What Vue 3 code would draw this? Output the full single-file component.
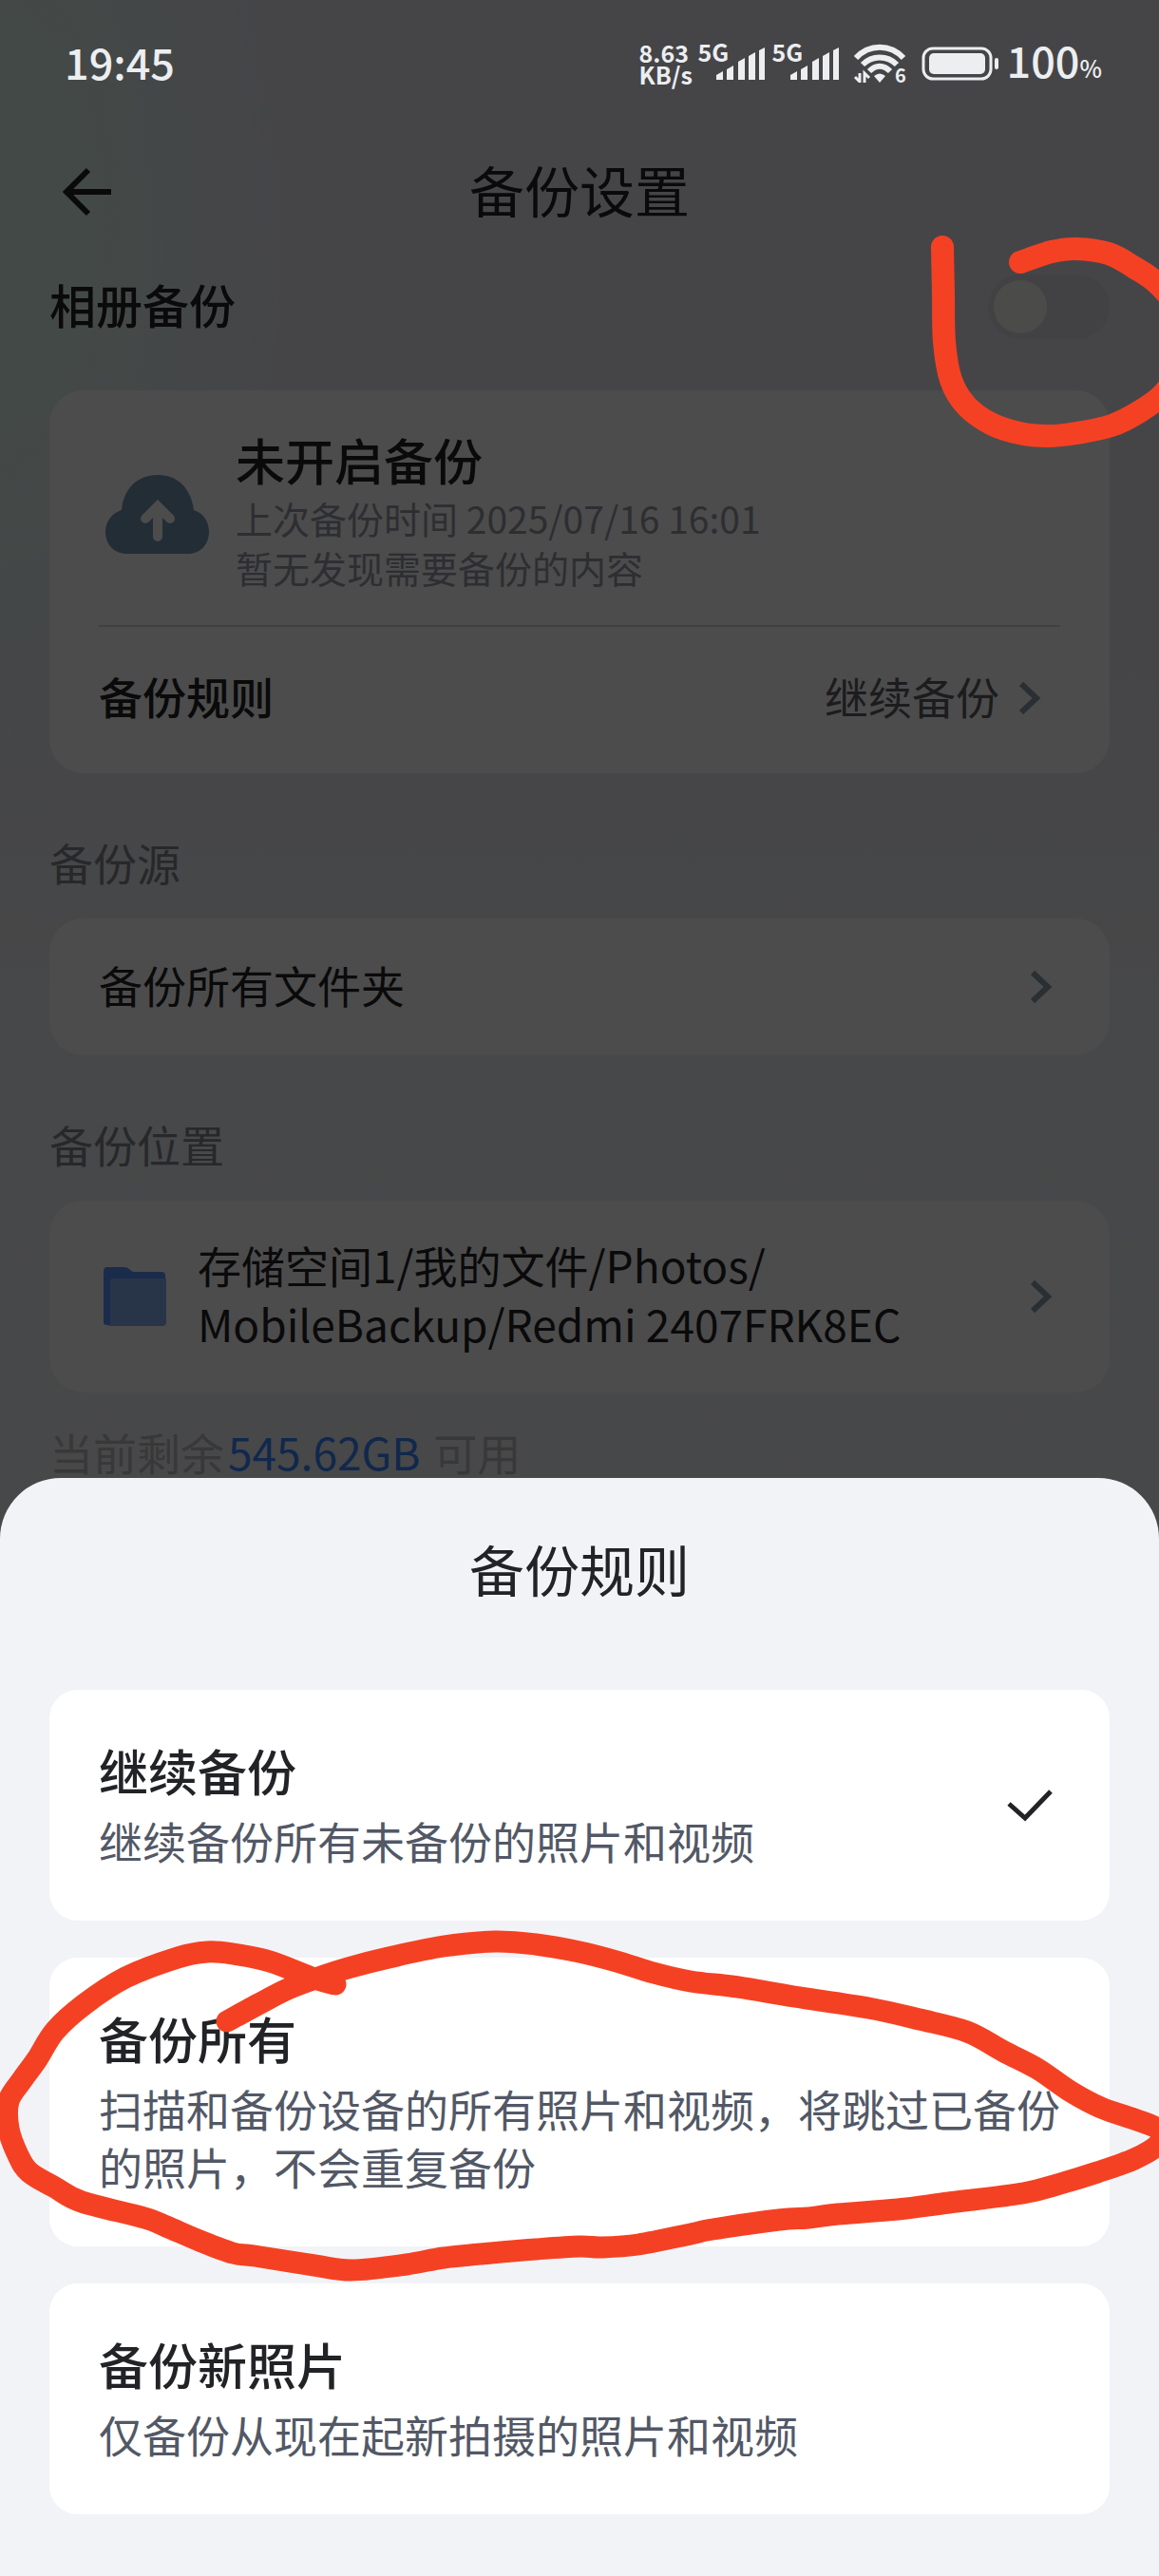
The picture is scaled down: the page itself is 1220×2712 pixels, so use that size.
<script setup>
import { ref } from 'vue'

const albumBackup = ref(false)
const rule = ref('continue')

const rules = [
  { id: 'continue', title: '继续备份', desc: '继续备份所有未备份的照片和视频' },
  { id: 'all', title: '备份所有', desc: '扫描和备份设备的所有照片和视频，将跳过已备份的照片，不会重复备份' },
  { id: 'new', title: '备份新照片', desc: '仅备份从现在起新拍摄的照片和视频' },
]

const signals = [0, 1]

// Centre lines of the hand-drawn marker strokes.
const toggleMark = [
  [992, 260], [993, 310], [994, 360], [1001, 400], [1017, 427], [1043, 446],
  [1073, 456], [1103, 459], [1133, 456], [1170, 448], [1200, 433], [1226, 413],
  [1246, 380], [1246, 335], [1220, 300], [1193, 281], [1167, 267], [1133, 262],
  [1107, 265], [1074, 276],
]
const optionMark = [
  [239, 2128], [272, 2110], [303, 2094], [335, 2082], [366, 2072], [409, 2061],
  [467, 2049], [521, 2044], [564, 2047], [610, 2055], [649, 2065], [688, 2077],
  [727, 2086], [777, 2092], [836, 2102], [914, 2114], [968, 2126], [1018, 2139],
  [1057, 2160], [1092, 2178], [1127, 2202], [1159, 2219], [1194, 2231],
  [1222, 2243], [1220, 2257], [1194, 2273], [1155, 2287], [1116, 2299],
  [1077, 2309], [999, 2319], [945, 2326], [882, 2331], [851, 2335], [820, 2337],
  [750, 2347], [727, 2352], [672, 2363], [633, 2366], [610, 2365], [564, 2368],
  [517, 2372], [467, 2377], [428, 2384], [370, 2390], [331, 2385], [268, 2375],
  [245, 2372], [210, 2359], [175, 2344], [152, 2335], [86, 2318], [58, 2303],
  [31, 2287], [19, 2269], [9, 2241], [9, 2212], [23, 2190], [39, 2168],
  [58, 2138], [89, 2110], [132, 2082], [187, 2061], [218, 2055], [245, 2057],
  [284, 2065], [331, 2083], [353, 2089],
]

// Catmull-Rom spline through the points, written as cubic Béziers.
function smooth(points) {
  let d = `M${points[0][0]} ${points[0][1]}`
  for (let i = 0; i < points.length - 1; i++) {
    const a = points[i - 1] || points[i]
    const b = points[i]
    const c = points[i + 1]
    const e = points[i + 2] || c
    d += `C${b[0] + (c[0] - a[0]) / 6} ${b[1] + (c[1] - a[1]) / 6} ${c[0] - (e[0] - b[0]) / 6} ${c[1] - (e[1] - b[1]) / 6} ${c[0]} ${c[1]}`
  }
  return d
}
</script>

<template>
  <div class="screen">
    <main class="page">
      <header class="topbar">
        <button class="back" type="button" aria-label="返回">
          <svg width="56" height="56" viewBox="0 0 56 56" fill="none" stroke="currentColor" stroke-width="6">
            <path d="M55 28H8M31 5L8 28L31 51" />
          </svg>
        </button>
        <h1>备份设置</h1>
      </header>

      <label class="switch-row">
        <span class="label">相册备份</span>
        <input v-model="albumBackup" class="switch" type="checkbox" role="switch" />
      </label>

      <section class="card">
        <div class="summary">
          <svg class="cloud" width="120" height="94" viewBox="0 0 120 94">
            <path fill="#7696b6" d="M30 94C16 94 7 84 7 71C7 60 14 51 24 48C26 25 41 11 62 11S97 25 100 48C110 51 116 60 116 71C116 84 107 94 94 94Z" />
            <path fill="none" stroke="#fff" stroke-width="10" stroke-linecap="round" stroke-linejoin="miter" d="M62 76V46M49 57L62 44L75 57" />
          </svg>
          <div>
            <h2>未开启备份</h2>
            <p>上次备份时间 2025/07/16 16:01</p>
            <p>暂无发现需要备份的内容</p>
          </div>
        </div>
        <button class="row rule-row" type="button">
          <span class="grow strong">备份规则</span>
          <span class="value">继续备份</span>
          <svg class="chevron" width="24" height="36" viewBox="0 0 24 36"><path d="M3 3L19 18L3 33" /></svg>
        </button>
      </section>

      <h3>备份源</h3>
      <button class="card row source-row" type="button">
        <span class="grow">备份所有文件夹</span>
        <svg class="chevron" width="24" height="36" viewBox="0 0 24 36"><path d="M3 3L19 18L3 33" /></svg>
      </button>

      <h3>备份位置</h3>
      <button class="card row path-row" type="button">
        <svg class="folder" width="76" height="64" viewBox="0 0 76 64">
          <path fill="#5a92fa" d="M5 5a4 4 0 0 1 4-4h17c3 0 5 1 7 3l3 2h30a4 4 0 0 1 4 4v10H14v42H8a3 3 0 0 1-3-3z" />
          <path fill="#86aef0" d="M15 13h56v46a4 4 0 0 1-4 4H8c3 0 4-1 4-4V16a3 3 0 0 1 3-3z" />
        </svg>
        <span class="grow">存储空间1/我的文件/Photos/<br />MobileBackup/Redmi 2407FRK8EC</span>
        <svg class="chevron" width="24" height="36" viewBox="0 0 24 36"><path d="M3 3L19 18L3 33" /></svg>
      </button>
      <p class="remain">当前剩余<b>545.62GB</b>可用</p>
    </main>

    <div class="scrim"></div>

    <div class="statusbar">
      <time>19:45</time>
      <div class="indicators">
        <span class="speed">8.63<br />KB/s</span>
        <span v-for="s in signals" :key="s" class="signal">
          <i>5G</i>
          <svg width="52" height="34" viewBox="0 0 52 34" fill="currentColor">
            <path d="M0 34v-5l7-4v9zM11 34V23l7-4v15zM23 34V15l7-4v23zM34 34V9l7-4v29zM45 34V3l6-3v34z" />
          </svg>
        </span>
        <svg class="wifi" width="56" height="42" viewBox="0 0 56 42" fill="none" stroke="currentColor">
          <path stroke-width="6" d="M2 15C16 0 38 0 52 15M9 22C19 12 35 12 45 22M16 29C23 22 31 22 38 29" />
          <path fill="currentColor" stroke="none" d="M27 41l-6-7q6-5 12 0z" />
          <path stroke-width="3" d="M6 31v10M1 35l5 5M11 41v-10l5 5" />
          <text x="43" y="41" font-size="20" font-weight="700" fill="currentColor" stroke="none">6</text>
        </svg>
        <svg class="battery" width="82" height="36" viewBox="0 0 82 36" fill="currentColor">
          <rect x="2" y="2" width="71" height="32" rx="10" fill="none" stroke="currentColor" stroke-width="3" />
          <rect x="8" y="7" width="59" height="22" rx="5" />
          <rect x="77" y="12" width="4" height="12" rx="2" />
        </svg>
        <span class="percent">100<small>%</small></span>
      </div>
    </div>

    <section class="sheet" role="dialog" aria-labelledby="sheet-title">
      <h2 id="sheet-title">备份规则</h2>
      <div class="options">
        <label v-for="r in rules" :key="r.id" class="option">
          <input v-model="rule" type="radio" name="rule" :value="r.id" />
          <span class="option-text">
            <strong>{{ r.title }}</strong>
            <span class="desc">{{ r.desc }}</span>
          </span>
          <svg v-if="rule === r.id" class="check" width="48" height="34" viewBox="0 0 48 34">
            <path d="M2 15L19 30L46 2" />
          </svg>
        </label>
      </div>
    </section>

    <svg class="marker" viewBox="0 0 1220 2712" aria-hidden="true">
      <path stroke-width="24" :d="smooth(toggleMark)" />
      <path stroke-width="23" :d="smooth(optionMark)" />
    </svg>
  </div>
</template>

<style>
body {
  margin: 0;
}
</style>

<style scoped>
.screen {
  position: relative;
  min-height: 100vh;
  overflow: hidden;
  font-family: "Noto Sans CJK SC", sans-serif;
  font-size: 46px;
  line-height: 60px;
  color: #222326;
  background:
    radial-gradient(ellipse 300px 640px at 0 240px, #e2f4ef 30%, transparent),
    linear-gradient(#e6e7f0, #e8e8f0 26%, #eff1f3 40%, #f1f2f4);
}
h1, h2, h3, p {
  margin: 0;
  font-weight: 400;
}
button {
  font: inherit;
  color: inherit;
  text-align: left;
  border: 0;
  background: none;
}
.grow {
  flex: 1;
}
.strong {
  font-weight: 500;
}
/* The family's glyphs sit low in their line box; this lifts them to the row's middle. */
h1, .label, .grow, .value {
  padding-bottom: 6px;
}

.page {
  padding: 134px 52px 0;
}
.topbar {
  display: grid;
  grid-template-columns: 1fr auto 1fr;
  align-items: center;
  height: 136px;
}
.back {
  justify-self: start;
  display: flex;
  padding: 0 10px;
}
h1 {
  font-size: 58px;
}
.switch-row {
  display: flex;
  align-items: center;
  justify-content: space-between;
  height: 106px;
  margin-bottom: 35px;
  font-size: 49px;
  font-weight: 500;
}
.switch {
  appearance: none;
  display: flex;
  align-items: center;
  width: 128px;
  height: 68px;
  margin: 0;
  padding: 0 6px;
  border-radius: 34px;
  background: #dddde5;
}
.switch::before {
  content: "";
  width: 56px;
  height: 56px;
  border-radius: 50%;
  background: #fafaf4;
}
.switch:checked {
  justify-content: flex-end;
  background: #5d93e6;
}

.card {
  border-radius: 36px;
  background: #fdfdfd;
}
.summary {
  display: flex;
  align-items: center;
  gap: 24px;
  margin: 0 52px;
  padding: 38px 0 35px;
  border-bottom: 2px solid #d6d8dc;
}
.summary h2 {
  font-size: 52px;
  font-weight: 500;
  line-height: 70px;
}
.summary p {
  font-size: 39px;
  line-height: 52px;
  color: #989ca8;
}
.row {
  display: flex;
  align-items: center;
  box-sizing: border-box;
  width: 100%;
  padding: 0 60px 0 52px;
}
.rule-row {
  height: 154px;
  padding: 0 72px 4px 52px;
}
.value {
  margin-right: 20px;
  color: #5e6064;
}
.chevron {
  fill: none;
  stroke: #8d9dae;
  stroke-width: 6;
}
h3 {
  margin: 63px 0 30px;
  font-size: 46px;
  color: #84868c;
}
.source-row {
  height: 144px;
}
.path-row {
  gap: 28px;
  padding-top: 36px;
  padding-bottom: 36px;
  line-height: 62px;
}
.remain {
  margin-top: 32px;
  color: #bbbcc0;
}
.remain b {
  margin: 0 14px 0 4px;
  font-weight: 400;
  color: #3a88ff;
}

.scrim {
  position: absolute;
  inset: 0;
  background: rgba(0, 0, 0, 0.7);
}

.statusbar {
  position: absolute;
  top: 0;
  left: 0;
  right: 0;
  display: flex;
  align-items: center;
  justify-content: space-between;
  height: 134px;
  padding: 0 60px 0 68px;
  font-size: 45px;
  font-weight: 500;
  color: #eceef0;
}
time {
  padding-bottom: 4px;
}
.indicators {
  display: flex;
  align-items: center;
}
.speed {
  width: 62px;
  font-size: 25px;
  line-height: 23px;
  font-weight: 700;
}
.signal {
  position: relative;
  padding: 0 7px 0 19px;
}
.signal svg {
  display: block;
}
.signal i {
  position: absolute;
  left: 0;
  top: -10px;
  font-size: 25px;
  line-height: 28px;
  font-style: normal;
  font-weight: 700;
}
.wifi {
  overflow: visible;
  margin: 0 15px 0 8px;
}
.battery {
  margin-right: 8px;
}
.percent small {
  font-size: 25px;
}

.sheet {
  position: absolute;
  left: 0;
  right: 0;
  bottom: 0;
  padding: 53px 52px 65px;
  border-radius: 64px 64px 0 0;
  background: #f2f3f7;
}
.sheet h2 {
  margin-bottom: 86px;
  font-size: 58px;
  line-height: 84px;
  text-align: center;
}
.options {
  display: flex;
  flex-direction: column;
  gap: 39px;
}
.option {
  display: flex;
  align-items: center;
  padding: 50px 52px;
  border-radius: 30px;
  background: #fff;
}
.option input {
  position: absolute;
  opacity: 0;
}
.option-text {
  flex: 1;
  padding-bottom: 4px;
}
.option strong {
  display: block;
  margin-bottom: 8px;
  font-size: 52px;
  font-weight: 500;
  line-height: 70px;
}
.desc {
  display: block;
  line-height: 61px;
  color: #525866;
}
.check {
  margin-right: 8px;
  fill: none;
  stroke: #222326;
  stroke-width: 5;
}

.marker {
  position: absolute;
  top: 0;
  left: 0;
  width: 100%;
  fill: none;
  stroke: #f54123;
  stroke-linecap: round;
  stroke-linejoin: round;
  pointer-events: none;
}
</style>
